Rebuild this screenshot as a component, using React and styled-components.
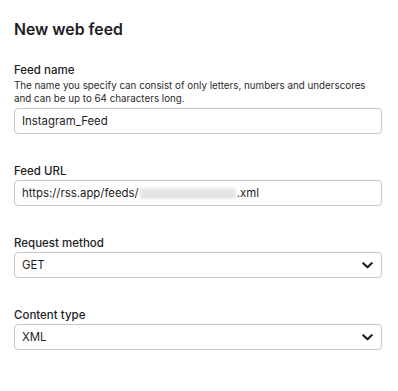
import React from 'react'
import styled, { createGlobalStyle } from 'styled-components'

const GlobalStyle = createGlobalStyle`
  html, body {
    margin: 0;
    padding: 0;
    background: #ffffff;
  }
  body {
    font-family: Inter, "Liberation Sans", Arial, sans-serif;
    color: #1d1d1f;
  }
`;

const Chevron = () => (
  <svg width="11" height="7" viewBox="0 0 11 7" fill="none">
    <path d="M1.3 1.3 L5.5 5.3 L9.7 1.3" stroke="#1d1d1f" strokeWidth="2.2" strokeLinecap="round" strokeLinejoin="round" />
  </svg>
)

const App = () => {
  return (
    <>
      <GlobalStyle />
      <Page>
        <Title>New web feed</Title>

        <Field>
          <Label>Feed name</Label>
          <Help>
            The name you specify can consist of only letters, numbers and underscores
            and can be up to 64 characters long.
          </Help>
          <Box>Instagram_Feed</Box>
        </Field>

        <Field>
          <Label>Feed URL</Label>
          <Box>
            https://rss.app/feeds/<Redacted />.xml
          </Box>
        </Field>

        <Field>
          <Label>Request method</Label>
          <Box select>
            GET
            <Chevron />
          </Box>
        </Field>

        <Field>
          <Label>Content type</Label>
          <Box select>
            XML
            <Chevron />
          </Box>
        </Field>
      </Page>
    </>
  )
}

export default App

const Page = styled.div`
  width: 398px;
  height: 391px;
  box-sizing: border-box;
  padding: 19px 16px 0 14px;
  display: flex;
  flex-direction: column;
  gap: 29px;
`;

const Title = styled.h2`
  margin: 0 0 -8px 0;
  font-size: 15.8px;
  line-height: 22px;
  font-weight: 600;
`;

const Field = styled.div`
  display: flex;
  flex-direction: column;
`;

const Label = styled.div`
  font-size: 11.5px;
  line-height: 16px;
  font-weight: 500;
  margin-bottom: 1px;
`;

const Help = styled.div`
  font-size: 9.8px;
  line-height: 13px;
  color: #2a2a2a;
  margin-bottom: 3px;
`;

const Box = styled.div`
  height: 26px;
  box-sizing: border-box;
  border: 1px solid #c6c6c8;
  border-radius: 4px;
  padding: 0 8px 0 7px;
  display: flex;
  align-items: center;
  justify-content: ${p => (p.select ? 'space-between' : 'flex-start')};
  font-size: 11.4px;
  color: #1d1d1f;
  background: #ffffff;
`;

const Redacted = styled.span`
  display: inline-block;
  width: 96px;
  height: 11px;
  margin: 0 1px;
  background: #e4e4e6;
  filter: blur(1.5px);
`;
